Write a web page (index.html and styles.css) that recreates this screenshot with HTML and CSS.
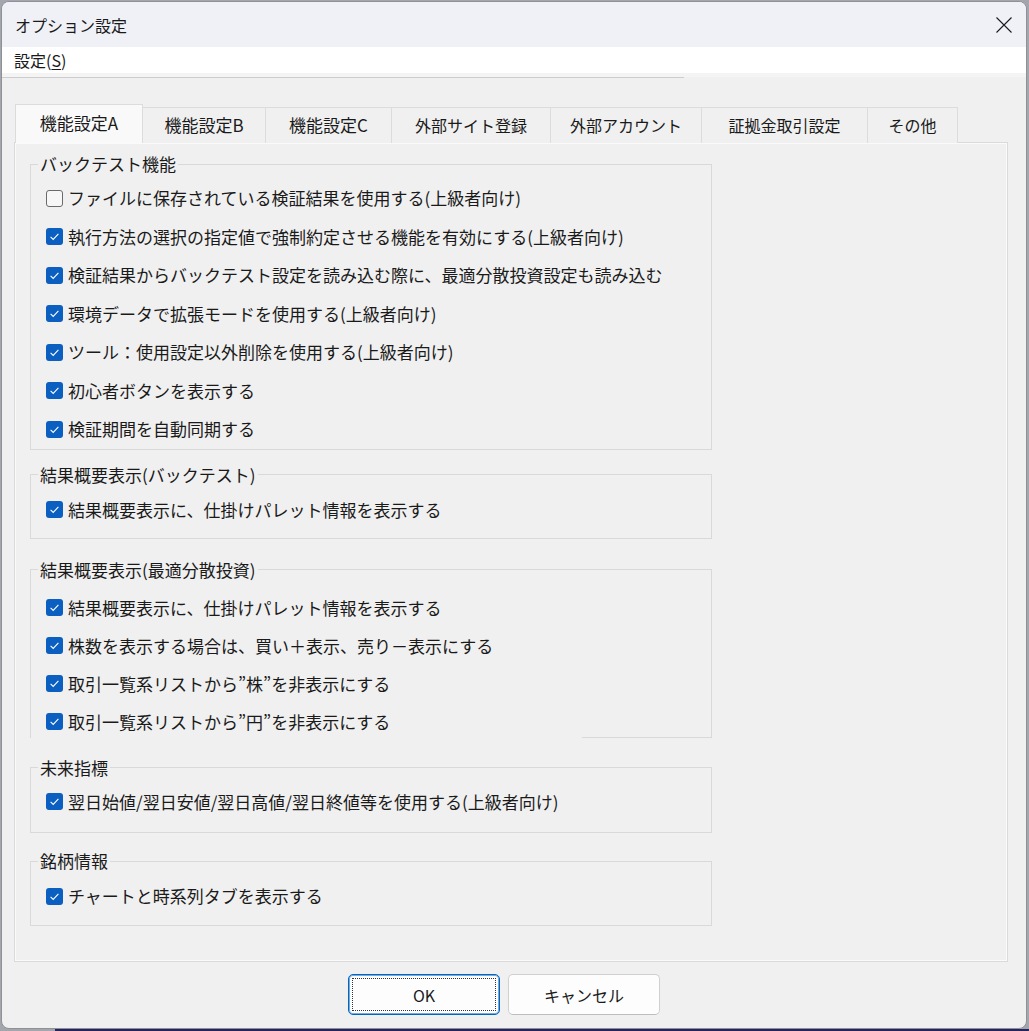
FILE: index.html
```html
<!DOCTYPE html>
<html lang="ja">
<head>
<meta charset="utf-8">
<title>オプション設定</title>
<link rel="stylesheet" href="styles.css">
</head>
<body>
<div class="window">
  <div class="titlebar">
    <span class="title">オプション設定</span>
    <span class="close"><svg width="16" height="16" viewBox="0 0 16 16"><path d="M0.5 0.5 L15.5 15.5 M15.5 0.5 L0.5 15.5" stroke="#1a1a1a" stroke-width="1.1" fill="none"/></svg></span>
  </div>
  <div class="menubar"><span class="menu-item">設定(<u>S</u>)</span></div>
  <div class="menu-gap"></div>
  <div class="menu-line"></div>
  <div class="dialog">
    <div class="tabs">
      <div class="tab sel w1">機能設定A</div>
      <div class="tab w2">機能設定B</div>
      <div class="tab w3">機能設定C</div>
      <div class="tab w4">外部サイト登録</div>
      <div class="tab w5">外部アカウント</div>
      <div class="tab w6">証拠金取引設定</div>
      <div class="tab w7">その他</div>
    </div>
    <div class="panel">
      <fieldset class="group g1">
        <legend>バックテスト機能</legend>
        <div class="row"><span class="cb off"></span><span>ファイルに保存されている検証結果を使用する(上級者向け)</span></div>
        <div class="row"><span class="cb on"><svg width="17" height="17" viewBox="0 0 17 17"><path d="M4.6 8.9 L7.2 11.4 L12.4 5.9" stroke="#fff" stroke-width="1.1" fill="none"/></svg></span><span>執行方法の選択の指定値で強制約定させる機能を有効にする(上級者向け)</span></div>
        <div class="row"><span class="cb on"><svg width="17" height="17" viewBox="0 0 17 17"><path d="M4.6 8.9 L7.2 11.4 L12.4 5.9" stroke="#fff" stroke-width="1.1" fill="none"/></svg></span><span>検証結果からバックテスト設定を読み込む際に、最適分散投資設定も読み込む</span></div>
        <div class="row"><span class="cb on"><svg width="17" height="17" viewBox="0 0 17 17"><path d="M4.6 8.9 L7.2 11.4 L12.4 5.9" stroke="#fff" stroke-width="1.1" fill="none"/></svg></span><span>環境データで拡張モードを使用する(上級者向け)</span></div>
        <div class="row"><span class="cb on"><svg width="17" height="17" viewBox="0 0 17 17"><path d="M4.6 8.9 L7.2 11.4 L12.4 5.9" stroke="#fff" stroke-width="1.1" fill="none"/></svg></span><span>ツール：使用設定以外削除を使用する(上級者向け)</span></div>
        <div class="row"><span class="cb on"><svg width="17" height="17" viewBox="0 0 17 17"><path d="M4.6 8.9 L7.2 11.4 L12.4 5.9" stroke="#fff" stroke-width="1.1" fill="none"/></svg></span><span>初心者ボタンを表示する</span></div>
        <div class="row"><span class="cb on"><svg width="17" height="17" viewBox="0 0 17 17"><path d="M4.6 8.9 L7.2 11.4 L12.4 5.9" stroke="#fff" stroke-width="1.1" fill="none"/></svg></span><span>検証期間を自動同期する</span></div>
      </fieldset>
      <fieldset class="group g2">
        <legend>結果概要表示(バックテスト)</legend>
        <div class="row"><span class="cb on"><svg width="17" height="17" viewBox="0 0 17 17"><path d="M4.6 8.9 L7.2 11.4 L12.4 5.9" stroke="#fff" stroke-width="1.1" fill="none"/></svg></span><span>結果概要表示に、仕掛けパレット情報を表示する</span></div>
      </fieldset>
      <fieldset class="group g3">
        <legend>結果概要表示(最適分散投資)</legend>
        <div class="row"><span class="cb on"><svg width="17" height="17" viewBox="0 0 17 17"><path d="M4.6 8.9 L7.2 11.4 L12.4 5.9" stroke="#fff" stroke-width="1.1" fill="none"/></svg></span><span>結果概要表示に、仕掛けパレット情報を表示する</span></div>
        <div class="row"><span class="cb on"><svg width="17" height="17" viewBox="0 0 17 17"><path d="M4.6 8.9 L7.2 11.4 L12.4 5.9" stroke="#fff" stroke-width="1.1" fill="none"/></svg></span><span>株数を表示する場合は、買い＋表示、売り－表示にする</span></div>
        <div class="row"><span class="cb on"><svg width="17" height="17" viewBox="0 0 17 17"><path d="M4.6 8.9 L7.2 11.4 L12.4 5.9" stroke="#fff" stroke-width="1.1" fill="none"/></svg></span><span>取引一覧系リストから”株”を非表示にする</span></div>
        <div class="row last-over"><span class="cb on"><svg width="17" height="17" viewBox="0 0 17 17"><path d="M4.6 8.9 L7.2 11.4 L12.4 5.9" stroke="#fff" stroke-width="1.1" fill="none"/></svg></span><span>取引一覧系リストから”円”を非表示にする</span></div>
      </fieldset>
      <fieldset class="group g4">
        <legend>未来指標</legend>
        <div class="row"><span class="cb on"><svg width="17" height="17" viewBox="0 0 17 17"><path d="M4.6 8.9 L7.2 11.4 L12.4 5.9" stroke="#fff" stroke-width="1.1" fill="none"/></svg></span><span>翌日始値/翌日安値/翌日高値/翌日終値等を使用する(上級者向け)</span></div>
      </fieldset>
      <fieldset class="group g5">
        <legend>銘柄情報</legend>
        <div class="row"><span class="cb on"><svg width="17" height="17" viewBox="0 0 17 17"><path d="M4.6 8.9 L7.2 11.4 L12.4 5.9" stroke="#fff" stroke-width="1.1" fill="none"/></svg></span><span>チャートと時系列タブを表示する</span></div>
      </fieldset>
    </div>
    <div class="buttons">
      <button class="btn ok"><span class="focus">OK</span></button>
      <button class="btn">キャンセル</button>
    </div>
  </div>
</div>
<div class="desk-strip"></div>
</body>
</html>
```
FILE: styles.css
```css
html, body {
  margin: 0;
  padding: 0;
}
body {
  width: 1029px;
  height: 1031px;
  overflow: hidden;
  background: #a3a6ad;
  font-family: "Noto Sans CJK JP", "Noto Sans", sans-serif;
  color: #000;
}
.window {
  box-sizing: border-box;
  width: 1026px;
  height: 1028px;
  margin: 1px 0 0 1px;
  border: 1px solid #8f9196;
  border-radius: 8px;
  overflow: hidden;
  background: #f0f0f0;
  display: flex;
  flex-direction: column;
}
.titlebar {
  height: 45px;
  flex: none;
  background: #eff1f6;
  display: flex;
  align-items: center;
  justify-content: space-between;
  padding: 0 14px 0 13px;
}
.title {
  font-size: 16px;
  line-height: 20px;
  color: #1a1a1a;
}
.close {
  display: flex;
  width: 16px;
  height: 16px;
}
.menubar {
  height: 26px;
  flex: none;
  background: #fff;
  display: flex;
  align-items: center;
  padding-left: 12px;
}
.menu-item {
  font-size: 16px;
  line-height: 20px;
  color: #1a1a1a;
}
.menu-item u {
  text-underline-offset: 2px;
}
.menu-gap {
  height: 4px;
  flex: none;
  background: #f4f4f4;
}
.menu-line {
  height: 1px;
  width: 682px;
  flex: none;
  background: #cdcdcd;
}
.dialog {
  flex: 1;
  display: flex;
  flex-direction: column;
}
.tabs {
  display: flex;
  align-items: flex-end;
  margin-top: 26px;
  padding-left: 13px;
  height: 39px;
  margin-bottom: -1px;
  position: relative;
  z-index: 1;
}
.tab {
  box-sizing: border-box;
  height: 36px;
  border: 1px solid #dcdcdc;
  border-bottom: none;
  border-left: none;
  background: #f0f0f0;
  display: flex;
  align-items: center;
  justify-content: center;
  font-size: 16px;
  line-height: 20px;
  padding-bottom: 1px;
  color: #1a1a1a;
}
.tab.sel {
  height: 39px;
  border-left: 1px solid #dcdcdc;
  background: #f9f9f9;
  padding-bottom: 2px;
}
.w1 { width: 128px; font-size: 17px; }
.w2 { width: 123px; font-size: 17px; }
.w3 { width: 126px; font-size: 17px; }
.w4 { width: 159px; }
.w5 { width: 151px; }
.w6 { width: 166px; }
.w7 { width: 90px; }
.panel {
  box-sizing: border-box;
  margin-left: 12px;
  width: 994px;
  height: 820px;
  border: 1px solid #dadada;
  box-shadow: inset 1px 1px 0 #fafafa, inset -1px -1px 0 #fafafa;
  background: #f0f0f0;
  padding: 11px 0 0 15px;
  display: flex;
  flex-direction: column;
}
.group {
  box-sizing: border-box;
  width: 682px;
  margin: 0;
  padding: 0;
  border: 1px solid #d9d9d9;
  min-width: 0;
}
.group legend {
  font-size: 17px;
  line-height: 20px;
  padding: 0 2px;
  margin-left: 7px;
  color: #1a1a1a;
}
.row {
  height: 38px;
  display: flex;
  align-items: center;
  gap: 5px;
  padding-left: 15px;
  font-size: 17px;
  line-height: 20px;
  color: #1a1a1a;
  white-space: nowrap;
}
.cb {
  width: 17px;
  height: 17px;
  box-sizing: border-box;
  border-radius: 3px;
  flex: none;
  display: flex;
}
.cb.off {
  border: 1px solid #6b6b6b;
  background: #f7f7f7;
}
.cb.on {
  background: #0a5fc0;
}
.g1 { padding: 5px 0 0; }
.g1 .row { height: 38.5px; }
.g2 { margin-top: 15px; padding: 6px 0 9px; }
.g3 { margin-top: 21px; padding: 9px 0 0; }
.g4 { margin-top: 20px; padding: 5px 0 11.5px; }
.g5 { margin-top: 18px; padding: 6px 0 10px; }
.last-over {
  width: 551px;
  box-sizing: border-box;
  background: #f0f0f0;
  margin-bottom: -4px;
  position: relative;
}
.buttons {
  display: flex;
  justify-content: flex-start;
  gap: 8px;
  padding-left: 346px;
  margin-top: 12px;
}
.btn {
  box-sizing: border-box;
  width: 152px;
  height: 41px;
  border: 1px solid #d0d0d0;
  border-bottom-color: #bdbdbd;
  border-radius: 5px;
  background: #fdfdfd;
  font-family: "Noto Sans CJK JP", "Noto Sans", sans-serif;
  font-size: 16px;
  line-height: 20px;
  color: #1a1a1a;
  padding: 0;
  display: flex;
  align-items: center;
  justify-content: center;
}
.btn.ok {
  border: 1px solid #0067c0;
  box-shadow: inset 0 0 0 1px #7aa9dc;
  padding: 3px;
}
.focus {
  flex: 1;
  align-self: stretch;
  display: flex;
  align-items: center;
  justify-content: center;
  border: 1px dotted #333;
}
.desk-strip {
  height: 3px;
  margin-left: 55px;
  background: #24245e;
}
```
